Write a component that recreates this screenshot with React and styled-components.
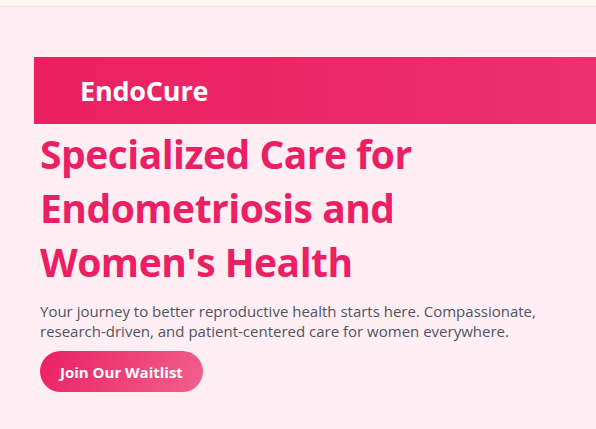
import styled, { createGlobalStyle } from 'styled-components';

const GlobalStyle = createGlobalStyle`
  html, body {
    margin: 0;
    padding: 0;
    background: #ffeef3;
    font-family: 'Open Sans', 'Noto Sans', sans-serif;
    overflow: hidden;
  }
`;

const Page = styled.div`
  width: 596px;
  height: 429px;
  background: #ffeef3;
  overflow: hidden;
`;

const TopBar = styled.div`
  height: 6px;
  background: #fff6f3;
  border-bottom: 1px solid #f9e1dc;
`;

const Hero = styled.section`
  padding: 50px 0 0 34px;
`;

const Banner = styled.header`
  height: 67px;
  width: 700px;
  display: flex;
  align-items: center;
  padding-left: 46px;
  background: linear-gradient(90deg, #eb2062 0%, #ec3574 100%);
`;

const Logo = styled.h2`
  margin: 0;
  color: #ffffff;
  font-size: 27px;
  font-weight: 700;
  letter-spacing: -0.2px;
`;

const Content = styled.div`
  padding-left: 6px;
  max-width: 510px;
`;

const Title = styled.h1`
  margin: 0;
  padding-top: 3px;
  color: #eb1f63;
  font-size: 39px;
  line-height: 54px;
  font-weight: 700;
  letter-spacing: -0.5px;
`;

const Lead = styled.p`
  margin: 12px 0 0;
  color: #50555f;
  font-size: 15px;
  line-height: 20px;
`;

const WaitlistButton = styled.button`
  margin-top: 10px;
  height: 41px;
  padding: 0 20px;
  border: none;
  border-radius: 21px;
  color: #ffffff;
  font-family: inherit;
  font-size: 15px;
  font-weight: 700;
  background: linear-gradient(120deg, #ea1f63 0%, #f2618f 100%);
  cursor: pointer;
`;

export default function App() {
  return (
    <Page>
      <GlobalStyle />
      <TopBar />
      <Hero>
        <Banner>
          <Logo>EndoCure</Logo>
        </Banner>
        <Content>
          <Title>Specialized Care for Endometriosis and Women's Health</Title>
          <Lead>
            Your journey to better reproductive health starts here. Compassionate,
            research-driven, and patient-centered care for women everywhere.
          </Lead>
          <WaitlistButton>Join Our Waitlist</WaitlistButton>
        </Content>
      </Hero>
    </Page>
  );
}
